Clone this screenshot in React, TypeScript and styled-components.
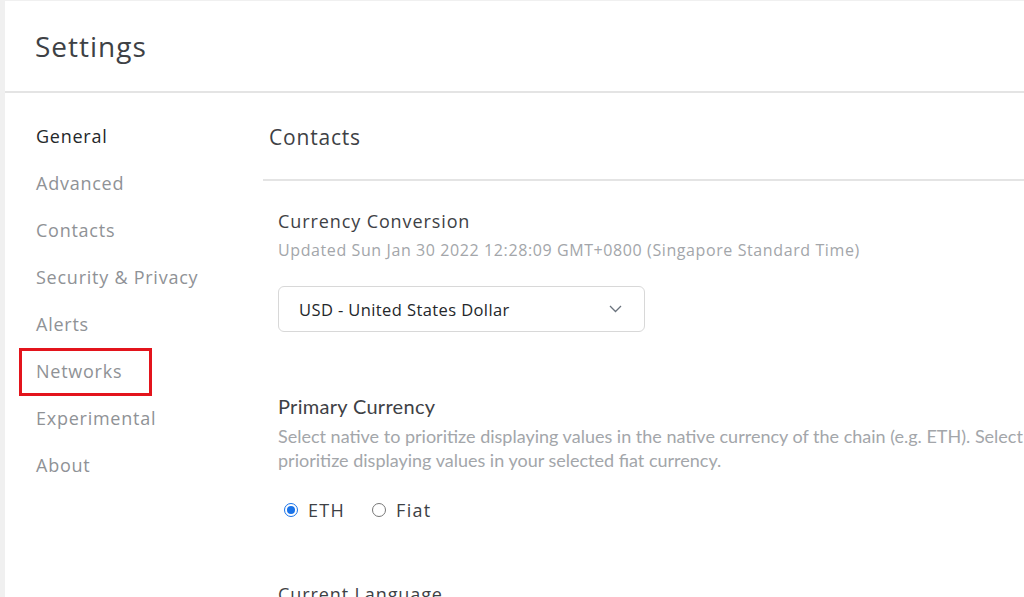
import React from "react";
import styled, { createGlobalStyle } from "styled-components";

const Global = createGlobalStyle`
  html, body { margin: 0; padding: 0; background: #f0f0f0; }
  body { font-family: "Open Sans", "Lato", sans-serif; color: #24272a; overflow: hidden; }
  * { box-sizing: border-box; }
`;

const Page = styled.div`
  width: 1024px;
  height: 597px;
  padding-left: 5px;
  padding-top: 1px;
  background: #f0f0f0;
  overflow: hidden;
`;

const Panel = styled.div`
  background: #fff;
  height: 100%;
  display: flex;
  flex-direction: column;
`;

const Header = styled.header`
  height: 92px;
  border-bottom: 2px solid #e4e4e4;
  display: flex;
  align-items: center;
  padding-left: 30px;
  flex-shrink: 0;
`;

const Title = styled.h1`
  margin: 0;
  font-size: 28px;
  font-weight: 400;
  color: #3e4145;
  letter-spacing: 1px;
`;

const Body = styled.div`
  display: flex;
  flex: 1;
  min-width: 0;
`;

const Sidebar = styled.nav`
  width: 258px;
  flex-shrink: 0;
  padding-top: 19px;
  padding-left: 14px;
  display: flex;
  flex-direction: column;
`;

const NavItem = styled.div<{ $active?: boolean }>`
  height: 47px;
  display: flex;
  align-items: center;
  width: fit-content;
  padding-left: 17px;
  font-size: 18px;
  letter-spacing: 0.75px;
  color: ${(p) => (p.$active ? "#24272a" : "#8f9296")};
  position: relative;
`;

const Highlight = styled.span`
  position: absolute;
  left: 0;
  top: 1px;
  width: 133px;
  height: 48px;
  border: 3px solid #e3141c;
`;

const Content = styled.main`
  flex: 1;
  min-width: 0;
  overflow: hidden;
  display: flex;
  flex-direction: column;
`;

const ContentHeader = styled.div`
  height: 88px;
  border-bottom: 2px solid #e4e4e4;
  display: flex;
  align-items: center;
  padding-left: 6px;
  padding-top: 2px;
`;

const ContentTitle = styled.h2`
  margin: 0;
  font-size: 21px;
  font-weight: 400;
  color: #3e4145;
  letter-spacing: 0.8px;
`;

const Sections = styled.div`
  padding-left: 15px;
  padding-top: 28px;
  display: flex;
  flex-direction: column;
`;

const Section = styled.section<{ $gap?: number }>`
  display: flex;
  flex-direction: column;
  margin-bottom: ${(p) => p.$gap ?? 0}px;
`;

const Label = styled.div<{ $narrow?: boolean }>`
  font-family: ${(p) => (p.$narrow ? `"Lato", sans-serif` : `"Open Sans", sans-serif`)};
  font-size: ${(p) => (p.$narrow ? "20px" : "18px")};
  color: #3e4145;
  letter-spacing: ${(p) => (p.$narrow ? "0.3px" : "0.9px")};
  line-height: 24px;
`;

const Desc = styled.div<{ $narrow?: boolean }>`
  font-family: ${(p) => (p.$narrow ? `"Lato", sans-serif` : `"Open Sans", sans-serif`)};
  font-size: ${(p) => (p.$narrow ? "18px" : "16px")};
  color: #a3a6aa;
  line-height: 24px;
  margin-top: ${(p) => (p.$narrow ? "6px" : "5px")};
  letter-spacing: ${(p) => (p.$narrow ? "0px" : "0.6px")};
  white-space: nowrap;
`;

const Select = styled.div`
  margin-top: 24px;
  width: 367px;
  height: 46px;
  border: 1px solid #d8d8d8;
  border-radius: 6px;
  display: flex;
  align-items: center;
  justify-content: space-between;
  padding: 0 22px 0 20px;
  font-size: 16.5px;
  letter-spacing: 0.4px;
  color: #24272a;
`;

const Radios = styled.div`
  display: flex;
  align-items: center;
  gap: 27px;
  margin-top: 26px;
  padding-left: 6px;
`;

const Radio = styled.label`
  display: flex;
  align-items: center;
  gap: 10px;
  font-size: 18px;
  letter-spacing: 1.3px;
  color: #3e4145;
`;

const Dot = styled.span<{ $on?: boolean }>`
  width: 14px;
  height: 14px;
  border-radius: 50%;
  border: ${(p) => (p.$on ? "1px solid #1a73e8" : "1px solid #777")};
  display: flex;
  align-items: center;
  justify-content: center;
  &::after {
    content: "";
    width: 8px;
    height: 8px;
    border-radius: 50%;
    background: ${(p) => (p.$on ? "#1a73e8" : "transparent")};
  }
`;

const navItems = [
  "General",
  "Advanced",
  "Contacts",
  "Security & Privacy",
  "Alerts",
  "Networks",
  "Experimental",
  "About",
];

export default function App() {
  return (
    <>
      <Global />
      <Page>
        <Panel>
          <Header>
            <Title>Settings</Title>
          </Header>
          <Body>
            <Sidebar>
              {navItems.map((n, i) => (
                <NavItem key={n} $active={i === 0}>
                  {n === "Networks" && <Highlight />}
                  {n}
                </NavItem>
              ))}
            </Sidebar>
            <Content>
              <ContentHeader>
                <ContentTitle>Contacts</ContentTitle>
              </ContentHeader>
              <Sections>
                <Section $gap={62}>
                  <Label>Currency Conversion</Label>
                  <Desc>
                    Updated Sun Jan 30 2022 12:28:09 GMT+0800 (Singapore Standard Time)
                  </Desc>
                  <Select>
                    <span>USD - United States Dollar</span>
                    <svg width="13" height="8" viewBox="0 0 13 8" fill="none">
                      <path d="M1 1l5.5 5.5L12 1" stroke="#6a737d" strokeWidth="1.3" />
                    </svg>
                  </Select>
                </Section>
                <Section $gap={60}>
                  <Label $narrow>Primary Currency</Label>
                  <Desc $narrow>
                    Select native to prioritize displaying values in the native currency of the chain (e.g. ETH). Select Fiat to
                    <br />
                    prioritize displaying values in your selected fiat currency.
                  </Desc>
                  <Radios>
                    <Radio>
                      <Dot $on />
                      ETH
                    </Radio>
                    <Radio>
                      <Dot />
                      Fiat
                    </Radio>
                  </Radios>
                </Section>
                <Section>
                  <Label>Current Language</Label>
                </Section>
              </Sections>
            </Content>
          </Body>
        </Panel>
      </Page>
    </>
  );
}
